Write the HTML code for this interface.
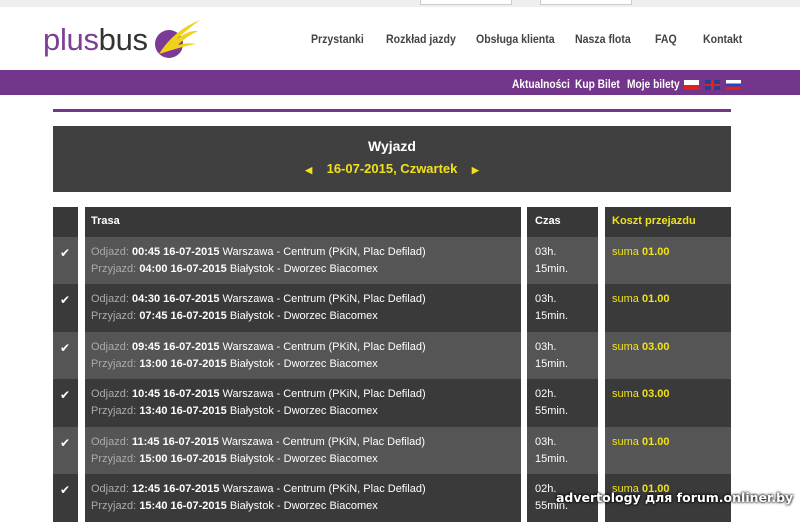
<!DOCTYPE html>
<html><head><meta charset="utf-8"><style>
*{margin:0;padding:0;box-sizing:border-box}
body{width:800px;height:522px;overflow:hidden;background:#fff;font-family:"Liberation Sans",sans-serif;position:relative}
.a{position:absolute}
.top{left:0;top:0;width:800px;height:7px;background:#efefef}
.nav a{position:absolute;top:32px;font-size:12px;font-weight:bold;color:#444;text-decoration:none;transform:scaleX(.88);transform-origin:left;white-space:nowrap}
.pb{left:0;top:70px;width:800px;height:25px;background:#74368a}
.sub{position:absolute;top:77px;font-size:12px;font-weight:bold;color:#fff;transform:scaleX(.85);transform-origin:left;white-space:nowrap}
.flag{position:absolute;top:80px;width:15px;height:10px}
.cell{position:absolute;color:#fff;font-size:11px;white-space:nowrap}
.r{position:absolute;font-size:11px;color:#fff;line-height:17px;white-space:nowrap}
.g{color:#aaa}
</style></head><body>
<div class="a top"></div>
<div class="a" style="left:420px;top:0;width:92px;height:5px;border:1px solid #ccc;border-top:none;background:#fff"></div>
<div class="a" style="left:540px;top:0;width:92px;height:5px;border:1px solid #ccc;border-top:none;background:#fff"></div>
<div class="a" style="left:43px;top:22px;font-size:31px;color:#7b3f95;letter-spacing:-.3px;white-space:nowrap">plus<span style="color:#333">bus</span></div>
<svg class="a" style="left:154px;top:18px" width="50" height="44" viewBox="0 0 50 44">
<circle cx="15" cy="26" r="14" fill="#7b3a96"/>
<path d="M5 36 Q20 12 46 2 Q30 14 22 22 Q34 12 44 13 Q30 20 24 27 Q34 24 42 26 Q30 28 5 36Z" fill="#f1d21a"/>
</svg>
<div class="nav">
<a style="left:311px">Przystanki</a><a style="left:386px">Rozkład jazdy</a><a style="left:476px">Obsługa klienta</a><a style="left:575px">Nasza flota</a><a style="left:655px">FAQ</a><a style="left:703px">Kontakt</a>
</div>
<div class="a pb"></div>
<div class="sub" style="left:512px">Aktualności</div>
<div class="sub" style="left:575px">Kup Bilet</div>
<div class="sub" style="left:627px">Moje bilety</div>
<div class="flag" style="left:684px;background:linear-gradient(#fff 50%,#e02020 50%)"></div>
<div class="flag" style="left:705px;background:#2a3f8f"><div style="position:absolute;left:6px;top:0;width:3px;height:10px;background:#d22"></div><div style="position:absolute;left:0;top:4px;width:15px;height:2px;background:#d22"></div></div>
<div class="flag" style="left:726px;background:linear-gradient(#fff 33%,#2046c8 33%,#2046c8 66%,#e02020 66%)"></div>
<div class="a" style="left:53px;top:109px;width:678px;height:3px;background:#74368a"></div>
<div class="a" style="left:53px;top:126px;width:678px;height:66px;background:#404040"></div>
<div class="a" style="left:53px;top:138px;width:678px;text-align:center;color:#fff;font-weight:bold;font-size:14px">Wyjazd</div>
<div class="a" style="left:53px;top:161px;width:678px;text-align:center;color:#f1e21a;font-weight:bold;font-size:13px"><span style="font-size:9px">◀</span>&nbsp;&nbsp;&nbsp;&nbsp;16-07-2015, Czwartek&nbsp;&nbsp;&nbsp;&nbsp;<span style="font-size:9px">▶</span></div>
<div id="t"></div>
<script>
var tops=[237,284,332,379,427,474];
var d=[["00:45","04:00","03h.","15min.","01.00"],["04:30","07:45","03h.","15min.","01.00"],["09:45","13:00","03h.","15min.","03.00"],["10:45","13:40","02h.","55min.","03.00"],["11:45","15:00","03h.","15min.","01.00"],["12:45","15:40","02h.","55min.","01.00"]];
var cols=[[53,25],[85,436],[527,71],[605,126]];
var h='';
cols.forEach(function(c){h+='<div class="a" style="left:'+c[0]+'px;top:207px;width:'+c[1]+'px;height:30px;background:#383838"></div>'});
h+='<div class="cell" style="left:91px;top:215px;font-weight:bold">Trasa</div><div class="cell" style="left:535px;top:215px;font-weight:bold">Czas</div><div class="cell" style="left:612px;top:215px;font-weight:bold;color:#f1e21a">Koszt przejazdu</div>';
tops.forEach(function(t,i){var bg=i%2?'#3a3a3a':'#555';var hh=(i<5?tops[i+1]:522)-t;
cols.forEach(function(c){h+='<div class="a" style="left:'+c[0]+'px;top:'+t+'px;width:'+c[1]+'px;height:'+hh+'px;background:'+bg+'"></div>'});
var x=d[i];
h+='<div class="r" style="left:60px;top:'+(t+8)+'px;font-size:12px">✔</div>';
h+='<div class="r" style="left:91px;top:'+(t+7)+'px"><span class="g">Odjazd:</span> <b>'+x[0]+' 16-07-2015</b> Warszawa - Centrum (PKiN, Plac Defilad)<br><span class="g">Przyjazd:</span> <b>'+x[1]+' 16-07-2015</b> Białystok - Dworzec Biacomex</div>';
h+='<div class="r" style="left:535px;top:'+(t+7)+'px">'+x[2]+'<br>'+x[3]+'</div>';
h+='<div class="r" style="left:612px;top:'+(t+7)+'px;color:#f1e21a">suma <b>'+x[4]+'</b></div>';});
document.getElementById('t').innerHTML=h;
</script>
<div class="a" style="left:556px;top:490px;color:#fff;font-weight:bold;font-size:12.5px;white-space:nowrap;font-family:'DejaVu Sans',sans-serif;text-shadow:0 0 3px #000,0 0 2px #000">advertology для forum.onliner.by</div>
</body></html>
